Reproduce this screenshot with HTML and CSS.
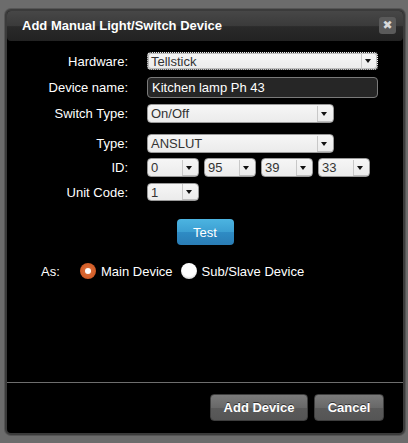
FILE: index.html
```html
<!DOCTYPE html>
<html>
<head>
    <title>Add Manual Light/Switch Device</title>
    <link rel="stylesheet" href="styles.css">
</head>
<body>
    <div class="dialog">
        <div class="titlebar">
            <span class="title">Add Manual Light/Switch Device</span>
            <span class="close-button">&#10006;</span>
        </div>

        <div class="dialog-body">
            <div class="row row-hardware">
                <label>Hardware:</label>
                <div class="select select-focus wide"><span>Tellstick</span><i class="arrow"></i></div>
            </div>
            <div class="row row-name">
                <label>Device name:</label>
                <div class="text-input">Kitchen lamp Ph 43</div>
            </div>
            <div class="row row-switch">
                <label>Switch Type:</label>
                <div class="select medium"><span>On/Off</span><i class="arrow"></i></div>
            </div>
            <div class="row row-type">
                <label>Type:</label>
                <div class="select medium"><span>ANSLUT</span><i class="arrow"></i></div>
            </div>
            <div class="row row-id">
                <label>ID:</label>
                <div class="id-group">
                    <div class="select small"><span>0</span><i class="arrow"></i></div>
                    <div class="select small"><span>95</span><i class="arrow"></i></div>
                    <div class="select small"><span>39</span><i class="arrow"></i></div>
                    <div class="select small"><span>33</span><i class="arrow"></i></div>
                </div>
            </div>
            <div class="row row-unit">
                <label>Unit Code:</label>
                <div class="select small"><span>1</span><i class="arrow"></i></div>
            </div>

            <div class="test-wrap">
                <button class="btn-test">Test</button>
            </div>

            <div class="as-row">
                <span class="as-label">As:</span>
                <span class="radio checked"></span>
                <span class="radio-text">Main Device</span>
                <span class="radio"></span>
                <span class="radio-text">Sub/Slave Device</span>
            </div>
        </div>

        <div class="footer">
            <button class="btn-gray btn-add">Add Device</button>
            <button class="btn-gray btn-cancel">Cancel</button>
        </div>
    </div>
</body>
</html>
```

FILE: styles.css
```css
html, body {
    margin: 0;
    height: 100%;
}

body {
    background-color: #6c6c6c;
    font-family: "Liberation Sans", Arial, sans-serif;
    font-size: 13px;
    overflow: hidden;
}

.dialog {
    box-sizing: border-box;
    margin: 9px 0 0 5px;
    width: 400px;
    height: 426px;
    border: 2px solid #3b3b3b;
    border-radius: 6px;
    background-color: #000;
    display: flex;
    flex-direction: column;
    box-shadow: 0 0 0 1px #555;
}

/* Title bar */
.titlebar {
    height: 30px;
    flex: none;
    display: flex;
    align-items: flex-start;
    justify-content: space-between;
    padding: 0 7px 0 15px;
    border-radius: 4px;
    background: linear-gradient(#474747, #3a3a3a 50%, #2a2a2a 52%, #222);
}

.title {
    color: #fff;
    font-weight: bold;
    font-size: 13px;
    line-height: 30px;
}

.close-button {
    margin-top: 6px;
    width: 17px;
    height: 17px;
    border-radius: 3px;
    background-color: #5a5a5a;
    color: #d8d8d8;
    font-family: "DejaVu Sans", sans-serif;
    font-size: 12px;
    line-height: 17px;
    text-align: center;
}

/* Form */
.dialog-body {
    flex: 1;
    padding-top: 11px;
}

.row {
    display: grid;
    grid-template-columns: 121px 1fr;
    column-gap: 19px;
    align-items: center;
}

.row label {
    color: #fff;
    text-align: right;
}

.row-name { margin-top: 7px; }
.row-switch { margin-top: 6px; }
.row-type { margin-top: 11px; }
.row-id { margin-top: 5px; }
.row-unit { margin-top: 6px; }

.select {
    box-sizing: border-box;
    height: 19px;
    display: flex;
    align-items: center;
    border: 1px solid #9a9a9a;
    border-radius: 4px;
    background: linear-gradient(#f6f6f6, #ebebeb);
    color: #333;
}

.select span {
    flex: 1;
    padding-left: 3px;
    line-height: 17px;
}

.select .arrow {
    box-sizing: border-box;
    width: 15px;
    height: 16px;
    margin-right: 1px;
    border-left: 1px solid #c8c8c8;
    border-bottom: 1px solid #bdbdbd;
    position: relative;
}

.select .arrow::after {
    content: "";
    position: absolute;
    left: 3px;
    top: 6px;
    border-left: 3.5px solid transparent;
    border-right: 3.5px solid transparent;
    border-top: 4px solid #111;
}

.select-focus {
    height: 18px;
    border: 1px dotted #222;
    outline: 1px solid #bbb;
    outline-offset: -2px;
}

.wide { width: 231px; }
.medium { width: 187px; }
.small { width: 52px; }

.id-group {
    display: flex;
    gap: 5px;
}

.row-unit .select { height: 18px; }

.text-input {
    box-sizing: border-box;
    width: 231px;
    height: 21px;
    border: 1px solid #7a7a7a;
    border-radius: 4px;
    background-color: #262626;
    color: #fff;
    padding-left: 4px;
    line-height: 19px;
}

/* Test button */
.test-wrap {
    margin-top: 18px;
    text-align: center;
}

.btn-test {
    width: 57px;
    height: 26px;
    border: none;
    border-radius: 4px;
    background: linear-gradient(#4cb4e1, #3c9fd2 50%, #2e8bc4 52%, #2a7db5);
    color: #fff;
    font-family: "Liberation Sans", Arial, sans-serif;
    font-size: 13px;
    padding: 0;
}

/* Radio row */
.as-row {
    margin-top: 18px;
    display: flex;
    align-items: center;
    height: 16px;
    color: #fff;
}

.as-label {
    margin-left: 34px;
    width: 39px;
}

.radio {
    box-sizing: border-box;
    width: 16px;
    height: 16px;
    border-radius: 50%;
    background: radial-gradient(circle at 50% 40%, #fff 55%, #cfcfcf 80%, #999);
    margin-right: 5px;
    display: flex;
    align-items: center;
    justify-content: center;
}

.radio.checked {
    background: radial-gradient(circle, #e0743e 0, #d25d28 65%, #a8461c);
}

.radio.checked::after {
    content: "";
    width: 6px;
    height: 6px;
    border-radius: 50%;
    background-color: #fff;
}

.radio-text {
    margin-right: 8px;
}

/* Footer */
.footer {
    flex: none;
    border-top: 1px solid #6e6e6e;
    padding: 11px 19px 12px 0;
    display: flex;
    justify-content: flex-end;
    gap: 6px;
}

.btn-gray {
    height: 27px;
    border: 1px solid #3e3e3e;
    border-radius: 4px;
    background: linear-gradient(#7a7a7a, #686868 50%, #5a5a5a 52%, #555);
    color: #fff;
    font-family: "Liberation Sans", Arial, sans-serif;
    font-size: 13px;
    font-weight: bold;
    text-shadow: 0 -1px 0 #333;
    padding: 0;
}

.btn-add { width: 98px; }
.btn-cancel { width: 70px; }
```
